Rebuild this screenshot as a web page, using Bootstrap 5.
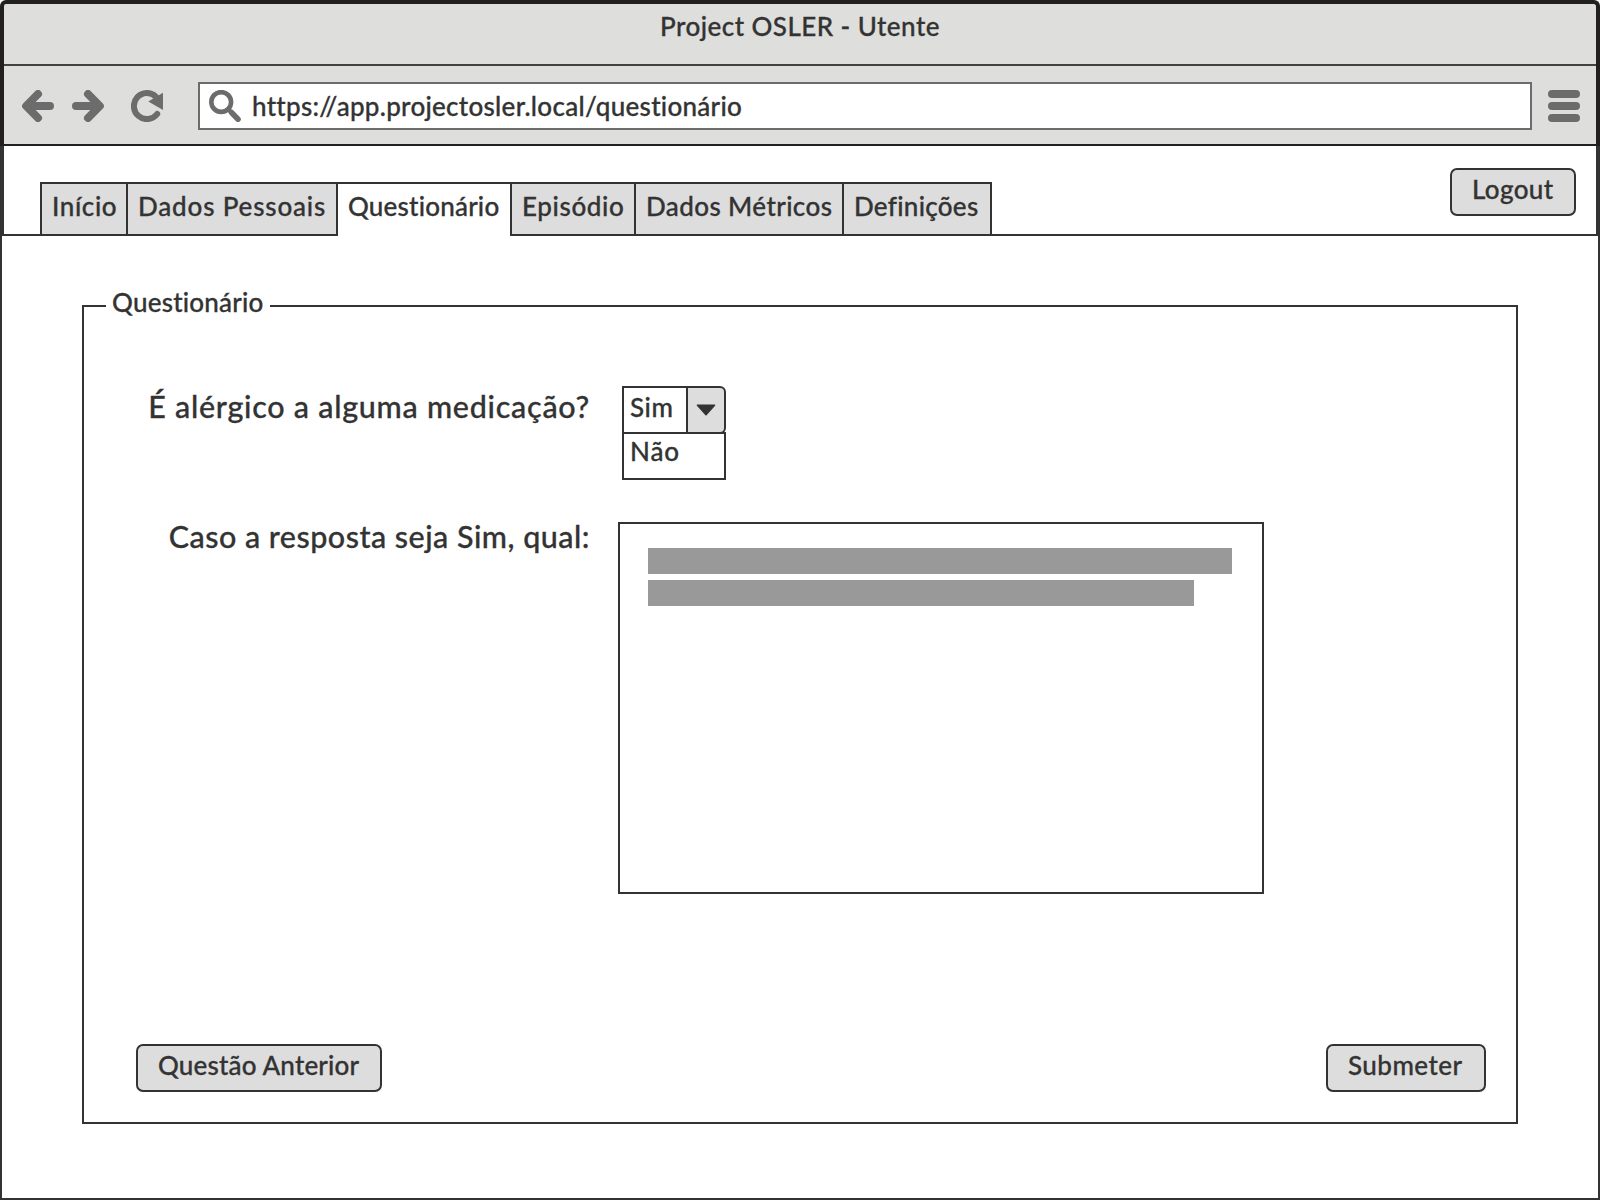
<!DOCTYPE html>
<html lang="pt">
<head>
<meta charset="utf-8">
<meta name="viewport" content="width=device-width, initial-scale=1">
<title>Project OSLER - Utente</title>
<link href="https://cdn.jsdelivr.net/npm/bootstrap@5.3.0/dist/css/bootstrap.min.css" rel="stylesheet">
<style>
  :root { --ink: #333; --chrome: #dededc; --fill: #ddd; --glyph: #6c6c6c; --frame: #231f20; }
  body { width: 1600px; height: 1200px; overflow: hidden; background: #fff; color: var(--ink);
         font: 500 26px/32px Lato, "Open Sans", sans-serif; font-variant-ligatures: none; -webkit-text-stroke: .3px var(--ink); }
  .chrome { background: var(--chrome); border: 4px solid var(--frame); border-bottom: 0; border-radius: 6px 6px 0 0; }
  .titlebar { height: 62px; padding-top: 6px; border-bottom: 2px solid #434143; letter-spacing: .45px; }
  .toolbar { height: 80px; padding: 2px 16px 0 18px; border-bottom: 2px solid var(--frame); }
  .toolbar svg { flex: none; color: var(--glyph); }
  .tool { padding: 0; border: 0; background: none; line-height: 0; }
  .tool-forward { margin-left: 18px; }
  .tool-reload { margin-left: 27px; }
  .address { height: 48px; margin: 0 16px 0 35px; border: 2px solid var(--glyph); background: #fff; padding-left: 9px; gap: 11px; letter-spacing: .28px; }
  .header-strip { height: 90px; border: solid var(--ink); border-width: 0 4px 2px; padding: 0 20px 0 36px; }
  .nav-tabs { border: 0; margin-bottom: -2px; flex-wrap: nowrap; }
  .nav-tabs .nav-link { height: 54px; margin: 0 -2px 0 0; padding: 6px 0 0 10px; border: 2px solid var(--ink);
         border-radius: 0; background: var(--fill); color: var(--ink); white-space: nowrap; }
  .nav-tabs .nav-link.active { background: #fff; color: var(--ink); border-color: var(--ink); border-bottom: 0; }
  .tab-inicio { width: 88px; letter-spacing: .6px; }
  .tab-pessoais { width: 212px; letter-spacing: .83px; }
  .tab-quest { width: 176px; letter-spacing: .2px; }
  .tab-episodio { width: 126px; letter-spacing: .62px; }
  .tab-metricos { width: 210px; letter-spacing: .4px; }
  .tab-def { width: 150px; letter-spacing: .28px; }
  .btn-sketch { --bs-btn-color: var(--ink); --bs-btn-bg: var(--fill); --bs-btn-border-color: var(--ink);
         --bs-btn-hover-color: var(--ink); --bs-btn-hover-bg: #cfcfcf; --bs-btn-hover-border-color: var(--ink);
         height: 48px; padding: 3px 0 9px 20px; border-width: 2px; border-radius: 7px; font: inherit; text-align: left; }
  .btn-logout { width: 126px; margin-top: 22px; letter-spacing: .35px; }
  .btn-prev { width: 246px; letter-spacing: .17px; }
  .btn-send { width: 160px; letter-spacing: .45px; }
  .page { height: 964px; border: solid var(--ink); border-width: 0 2px 2px; padding: 50px 80px 0; }
  .question-set { height: 838px; border: 2px solid var(--ink); }
  .question-set > legend { float: none; width: 164px; height: 40px; margin: 0 0 0 22px; padding: 0 0 0 6px;
         font-size: 26px; line-height: 32px; letter-spacing: .22px; }
  .question-body { height: 796px; padding: 60px 30px 30px 0; }
  .question-label { width: 506px; font-size: 30.5px; line-height: 36px; text-align: right; white-space: nowrap; flex: none; }
  .label-allergy { padding-top: 2px; letter-spacing: .73px; }
  .label-which { margin-top: -4px; letter-spacing: .48px; }
  .combo { width: 104px; margin-left: 32px; }
  .combo-head { height: 48px; }
  .combo-value { width: 66px; border: 2px solid var(--ink); padding: 3px 0 0 6px; letter-spacing: .56px; }
  .combo-arrow { width: 40px; margin-left: -2px; padding: 0; border: 2px solid var(--ink); border-radius: 0 6px 6px 0; background: var(--fill); }
  .combo-list { height: 48px; margin-top: -2px; border: 2px solid var(--ink); padding: 1px 0 0 6px; letter-spacing: .9px; }
  .answer-row { margin-top: 42px; }
  .answer-box { width: 646px; height: 372px; margin-left: 28px; border: 2px solid var(--ink); padding: 24px 28px; }
  .redacted { height: 26px; background: #999; }
  .redacted + .redacted { margin-top: 5.5px; }
  .line-long { width: 584px; }
  .line-short { width: 546px; }
  .actions { padding-left: 52px; }
</style>
</head>
<body>
<header class="chrome">
  <div class="titlebar text-center">Project OSLER - Utente</div>
  <div class="toolbar d-flex align-items-center">
    <button class="tool" type="button" aria-label="Voltar"><svg width="32" height="32" viewBox="0 0 32 32" fill="none" stroke="currentColor" stroke-width="8" stroke-linecap="round" stroke-linejoin="round"><path d="M28 16H4.5M16 4L4.2 16L16 28"/></svg></button>
    <button class="tool tool-forward" type="button" aria-label="Avançar"><svg width="32" height="32" viewBox="0 0 32 32" fill="none" stroke="currentColor" stroke-width="8" stroke-linecap="round" stroke-linejoin="round"><path d="M4 16H27.5M16 4L27.8 16L16 28"/></svg></button>
    <button class="tool tool-reload" type="button" aria-label="Recarregar"><svg width="32" height="32" viewBox="0 0 32 32"><path d="M26.2 24A13 13 0 1 1 25 6.8" fill="none" stroke="currentColor" stroke-width="6" stroke-linecap="round"/><path d="M32 2.8V20L17.3 11.4Z" fill="currentColor"/></svg></button>
    <div class="address d-flex align-items-center flex-grow-1">
      <svg width="32" height="32" viewBox="0 0 32 32" fill="none" stroke="currentColor" stroke-linecap="round"><circle cx="12.2" cy="12" r="9.9" stroke-width="4.6"/><path d="M19.5 19.5L23 23" stroke-width="4"/><path d="M22.5 22.5L29 29.2" stroke-width="5.6"/></svg>
      <span>https://app.projectosler.local/questionário</span>
    </div>
    <button class="tool" type="button" aria-label="Menu"><svg width="32" height="32" viewBox="0 0 32 32" fill="currentColor"><rect width="32" height="8" rx="4"/><rect y="12" width="32" height="8" rx="4"/><rect y="24" width="32" height="8" rx="4"/></svg></button>
  </div>
</header>

<div class="header-strip d-flex justify-content-between">
  <nav class="nav nav-tabs align-self-end">
    <a class="nav-link tab-inicio" href="#">Início</a>
    <a class="nav-link tab-pessoais" href="#">Dados Pessoais</a>
    <a class="nav-link tab-quest active" aria-current="page" href="#">Questionário</a>
    <a class="nav-link tab-episodio" href="#">Episódio</a>
    <a class="nav-link tab-metricos" href="#">Dados Métricos</a>
    <a class="nav-link tab-def" href="#">Definições</a>
  </nav>
  <button type="button" class="btn btn-sketch btn-logout">Logout</button>
</div>

<main class="page">
  <fieldset class="question-set">
    <legend>Questionário</legend>
    <div class="question-body d-flex flex-column">
      <div class="d-flex align-items-start">
        <div class="question-label label-allergy">É alérgico a alguma medicação?</div>
        <div class="combo">
          <div class="combo-head d-flex">
            <div class="combo-value">Sim</div>
            <button type="button" class="combo-arrow d-flex align-items-center justify-content-center" aria-label="Abrir lista"><svg width="20" height="12" viewBox="0 0 20 12"><path d="M1.5 1.2H18.5L10 10.6Z" fill="#333" stroke="#333" stroke-width="1.6" stroke-linejoin="round"/></svg></button>
          </div>
          <div class="combo-list">Não</div>
        </div>
      </div>
      <div class="answer-row d-flex align-items-start">
        <div class="question-label label-which">Caso a resposta seja Sim, qual:</div>
        <div class="answer-box">
          <div class="redacted line-long"></div>
          <div class="redacted line-short"></div>
        </div>
      </div>
      <div class="actions d-flex justify-content-between mt-auto">
        <button type="button" class="btn btn-sketch btn-prev">Questão Anterior</button>
        <button type="button" class="btn btn-sketch btn-send">Submeter</button>
      </div>
    </div>
  </fieldset>
</main>
<script src="https://cdn.jsdelivr.net/npm/bootstrap@5.3.0/dist/js/bootstrap.bundle.min.js"></script>
</body>
</html>
